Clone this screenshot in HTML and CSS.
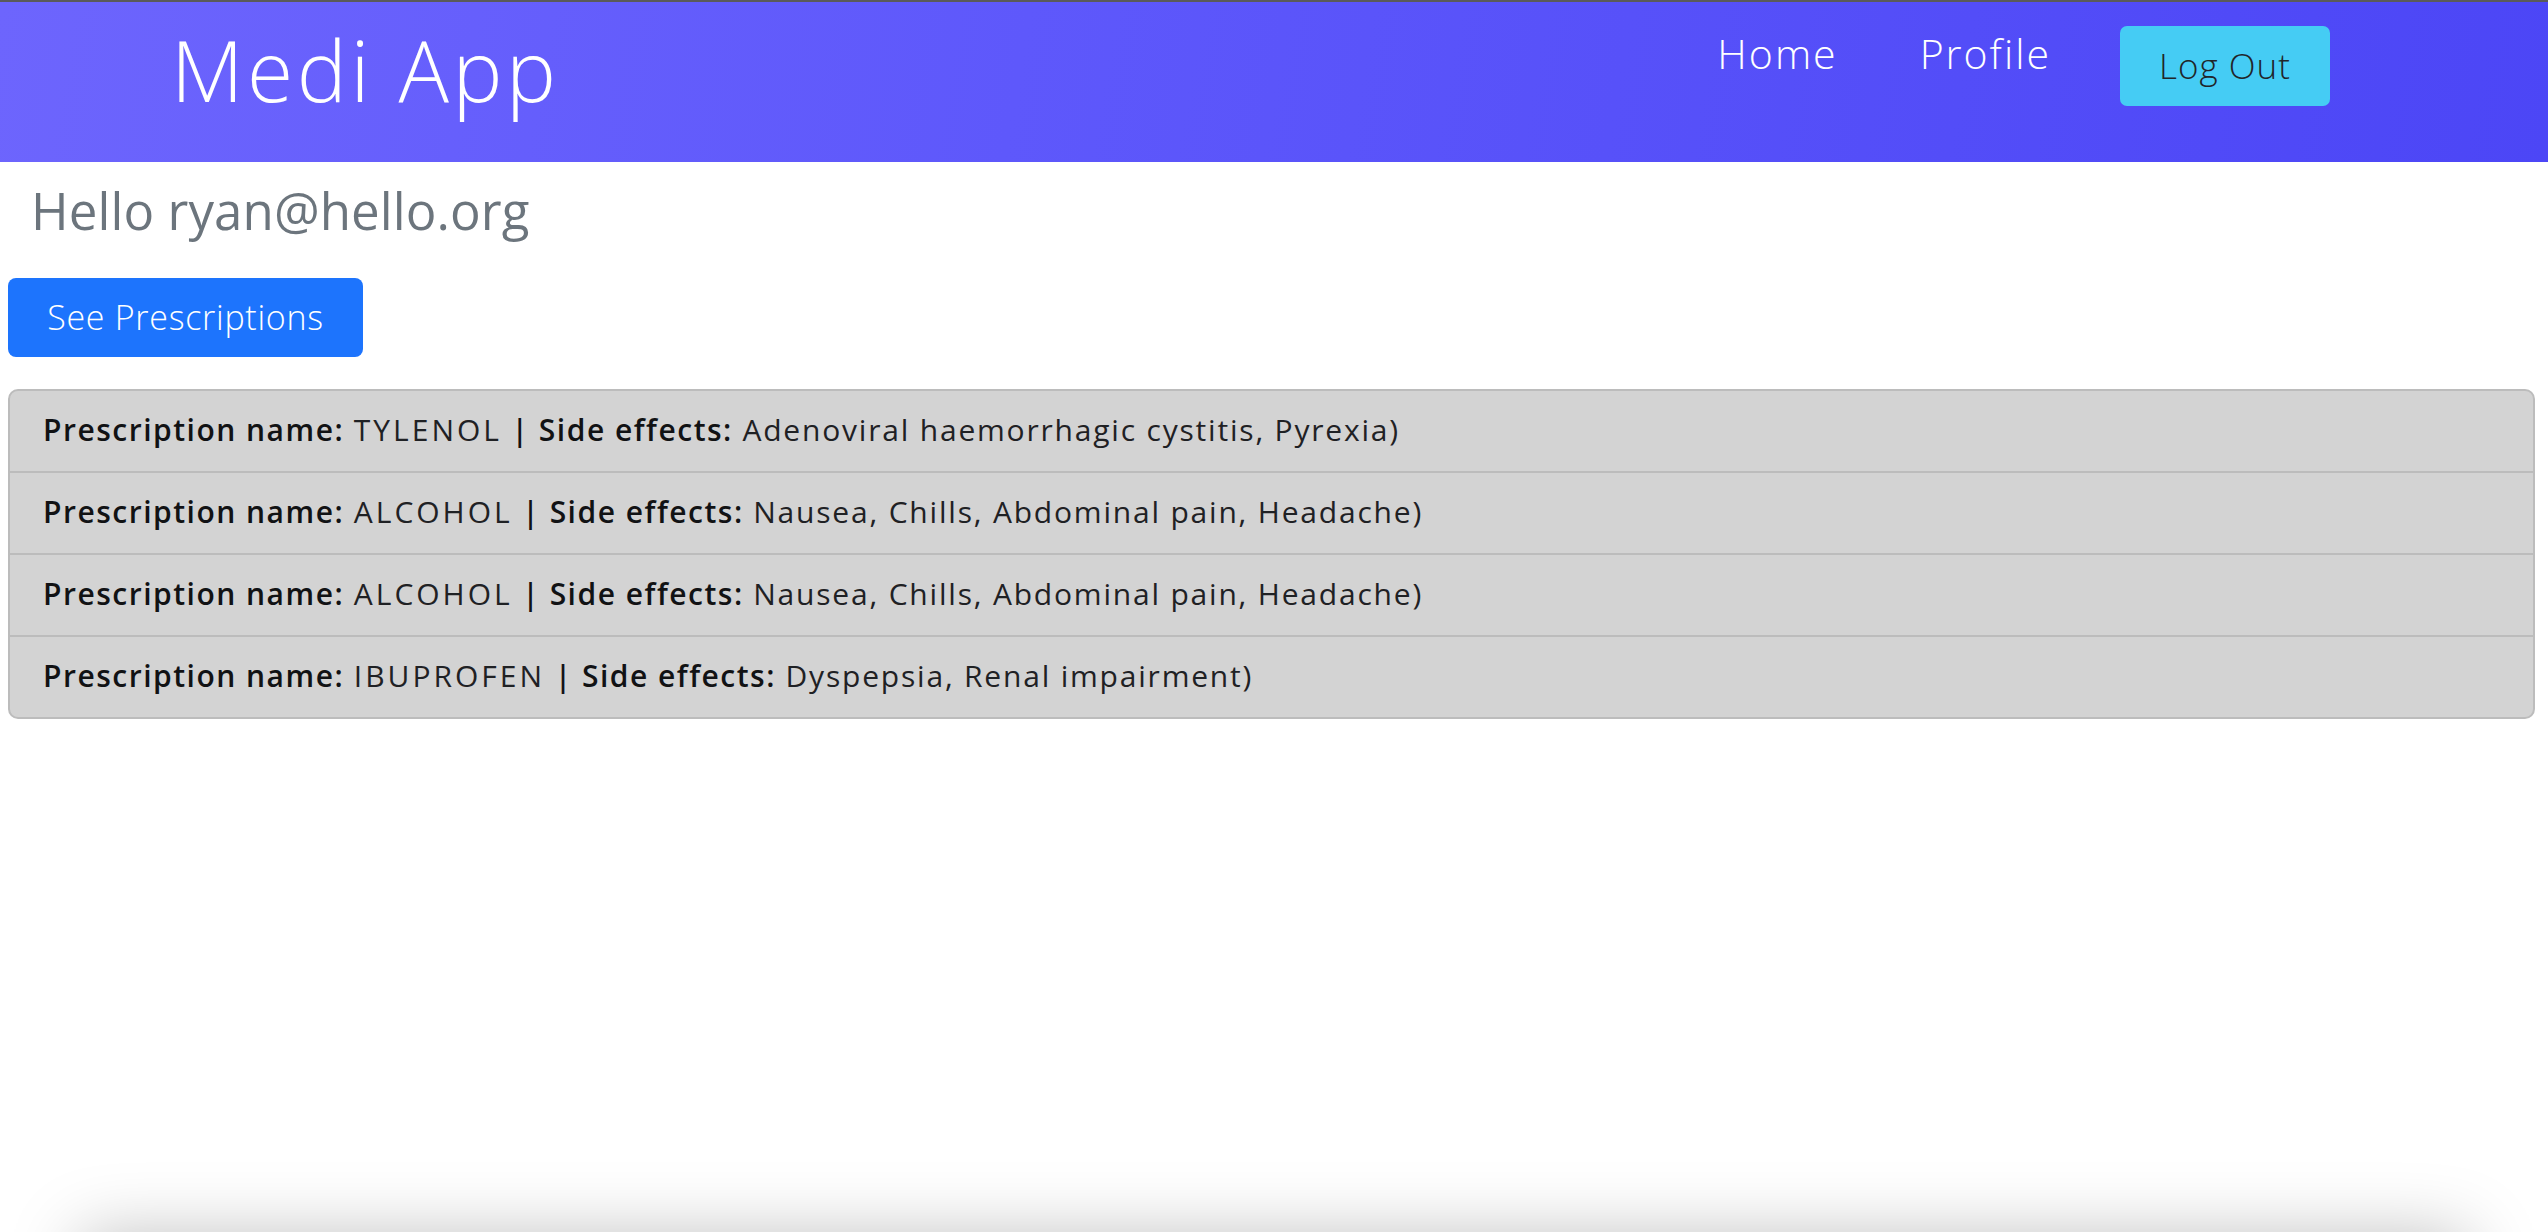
FILE: index.html
```html
<!DOCTYPE html>
<html lang="en">
<head>
<meta charset="utf-8">
<title>Medi App</title>
<link rel="stylesheet" href="styles.css">
</head>
<body>
<div class="page">
  <header class="navbar">
    <div class="brand">Medi App</div>
    <nav class="nav">
      <a class="nav-link" href="#">Home</a>
      <a class="nav-link" href="#">Profile</a>
      <button class="btn btn-info" type="button">Log Out</button>
    </nav>
  </header>
  <main class="content">
    <h2 class="greeting">Hello ryan@hello.org</h2>
    <button class="btn btn-primary" type="button">See Prescriptions</button>
    <ul class="rx-list">
      <li class="rx-item"><strong>Prescription name:</strong> <span class="rx-name">TYLENOL</span> <strong>| Side effects:</strong> Adenoviral haemorrhagic cystitis, Pyrexia)</li>
      <li class="rx-item"><strong>Prescription name:</strong> <span class="rx-name">ALCOHOL</span> <strong>| Side effects:</strong> Nausea, Chills, Abdominal pain, Headache)</li>
      <li class="rx-item"><strong>Prescription name:</strong> <span class="rx-name">ALCOHOL</span> <strong>| Side effects:</strong> Nausea, Chills, Abdominal pain, Headache)</li>
      <li class="rx-item"><strong>Prescription name:</strong> <span class="rx-name">IBUPROFEN</span> <strong>| Side effects:</strong> Dyspepsia, Renal impairment)</li>
    </ul>
  </main>
  <footer class="footer"></footer>
</div>
</body>
</html>
```

FILE: styles.css
```css
* { box-sizing: border-box; }

html, body {
  margin: 0;
  padding: 0;
  background: #ffffff;
}

body {
  font-family: "Open Sans", "Noto Sans", "Liberation Sans", sans-serif;
  color: #212529;
  overflow: hidden;
}

.page {
  min-height: calc(100vh + 124px);
  display: flex;
  flex-direction: column;
}

/* ---------- Navbar ---------- */
.navbar {
  height: 162px;
  border-top: 2px solid #5a5a5a;
  background: linear-gradient(100deg, #6d65fd 0%, #5e58fb 40%, #4c46f6 100%);
  display: flex;
  align-items: flex-start;
  padding: 0 218px 0 171px;
}

.brand {
  font-size: 84px;
  line-height: 1;
  font-weight: 300;
  color: #ffffff;
  margin-top: 26px;
  letter-spacing: 3.6px;
}

.nav {
  margin-left: auto;
  display: flex;
  align-items: flex-start;
}

.nav-link {
  font-size: 41px;
  line-height: 1;
  font-weight: 300;
  color: #ffffff;
  text-decoration: none;
  letter-spacing: 2px;
  margin-top: 31px;
  margin-right: 82px;
}

.nav-link:last-of-type {
  margin-right: 69px;
}

/* ---------- Buttons ---------- */
.btn {
  font-family: inherit;
  border: 0;
  display: flex;
  align-items: center;
  justify-content: center;
  cursor: pointer;
}

.btn-info {
  margin-top: 24px;
  width: 210px;
  height: 80px;
  border-radius: 7px;
  background: #45ccf4;
  color: #212529;
  font-size: 35px;
  font-weight: 300;
  letter-spacing: 1px;
  padding: 0 0 2px;
}

.btn-primary {
  width: 355px;
  height: 79px;
  border-radius: 8px;
  background: #1d74fd;
  color: #ffffff;
  font-size: 34px;
  font-weight: 300;
  letter-spacing: 0.7px;
  margin-left: 8px;
  padding: 0 0 2px;
}

/* ---------- Content ---------- */
.content {
  flex: 1;
}

.greeting {
  margin: 18px 0 37px 31px;
  font-size: 51px;
  line-height: 1.2;
  font-weight: 500;
  letter-spacing: 0.1px;
  color: #6c757d;
}

.rx-list {
  list-style: none;
  margin: 32px 13px 0 8px;
  padding: 0;
  border: 2px solid #bcbcbc;
  border-radius: 10px;
  background: #d3d3d3;
  overflow: hidden;
}

.rx-item {
  display: block;
  height: 80px;
  line-height: 78px;
  padding: 0 0 0 33px;
  font-size: 30px;
  font-weight: 400;
  letter-spacing: 1.8px;
  color: #1f2124;
  white-space: nowrap;
}

.rx-item + .rx-item {
  height: 82px;
  border-top: 2px solid #bcbcbc;
}

.rx-item strong {
  font-weight: 600;
  letter-spacing: 1.5px;
  color: #111214;
}

.rx-name {
  letter-spacing: 3px;
}

/* ---------- Footer shadow ---------- */
.footer {
  height: 120px;
  margin: 0 80px;
  background: #ffffff;
  box-shadow: 0 0 70px rgba(0, 0, 0, 0.26);
}
```
